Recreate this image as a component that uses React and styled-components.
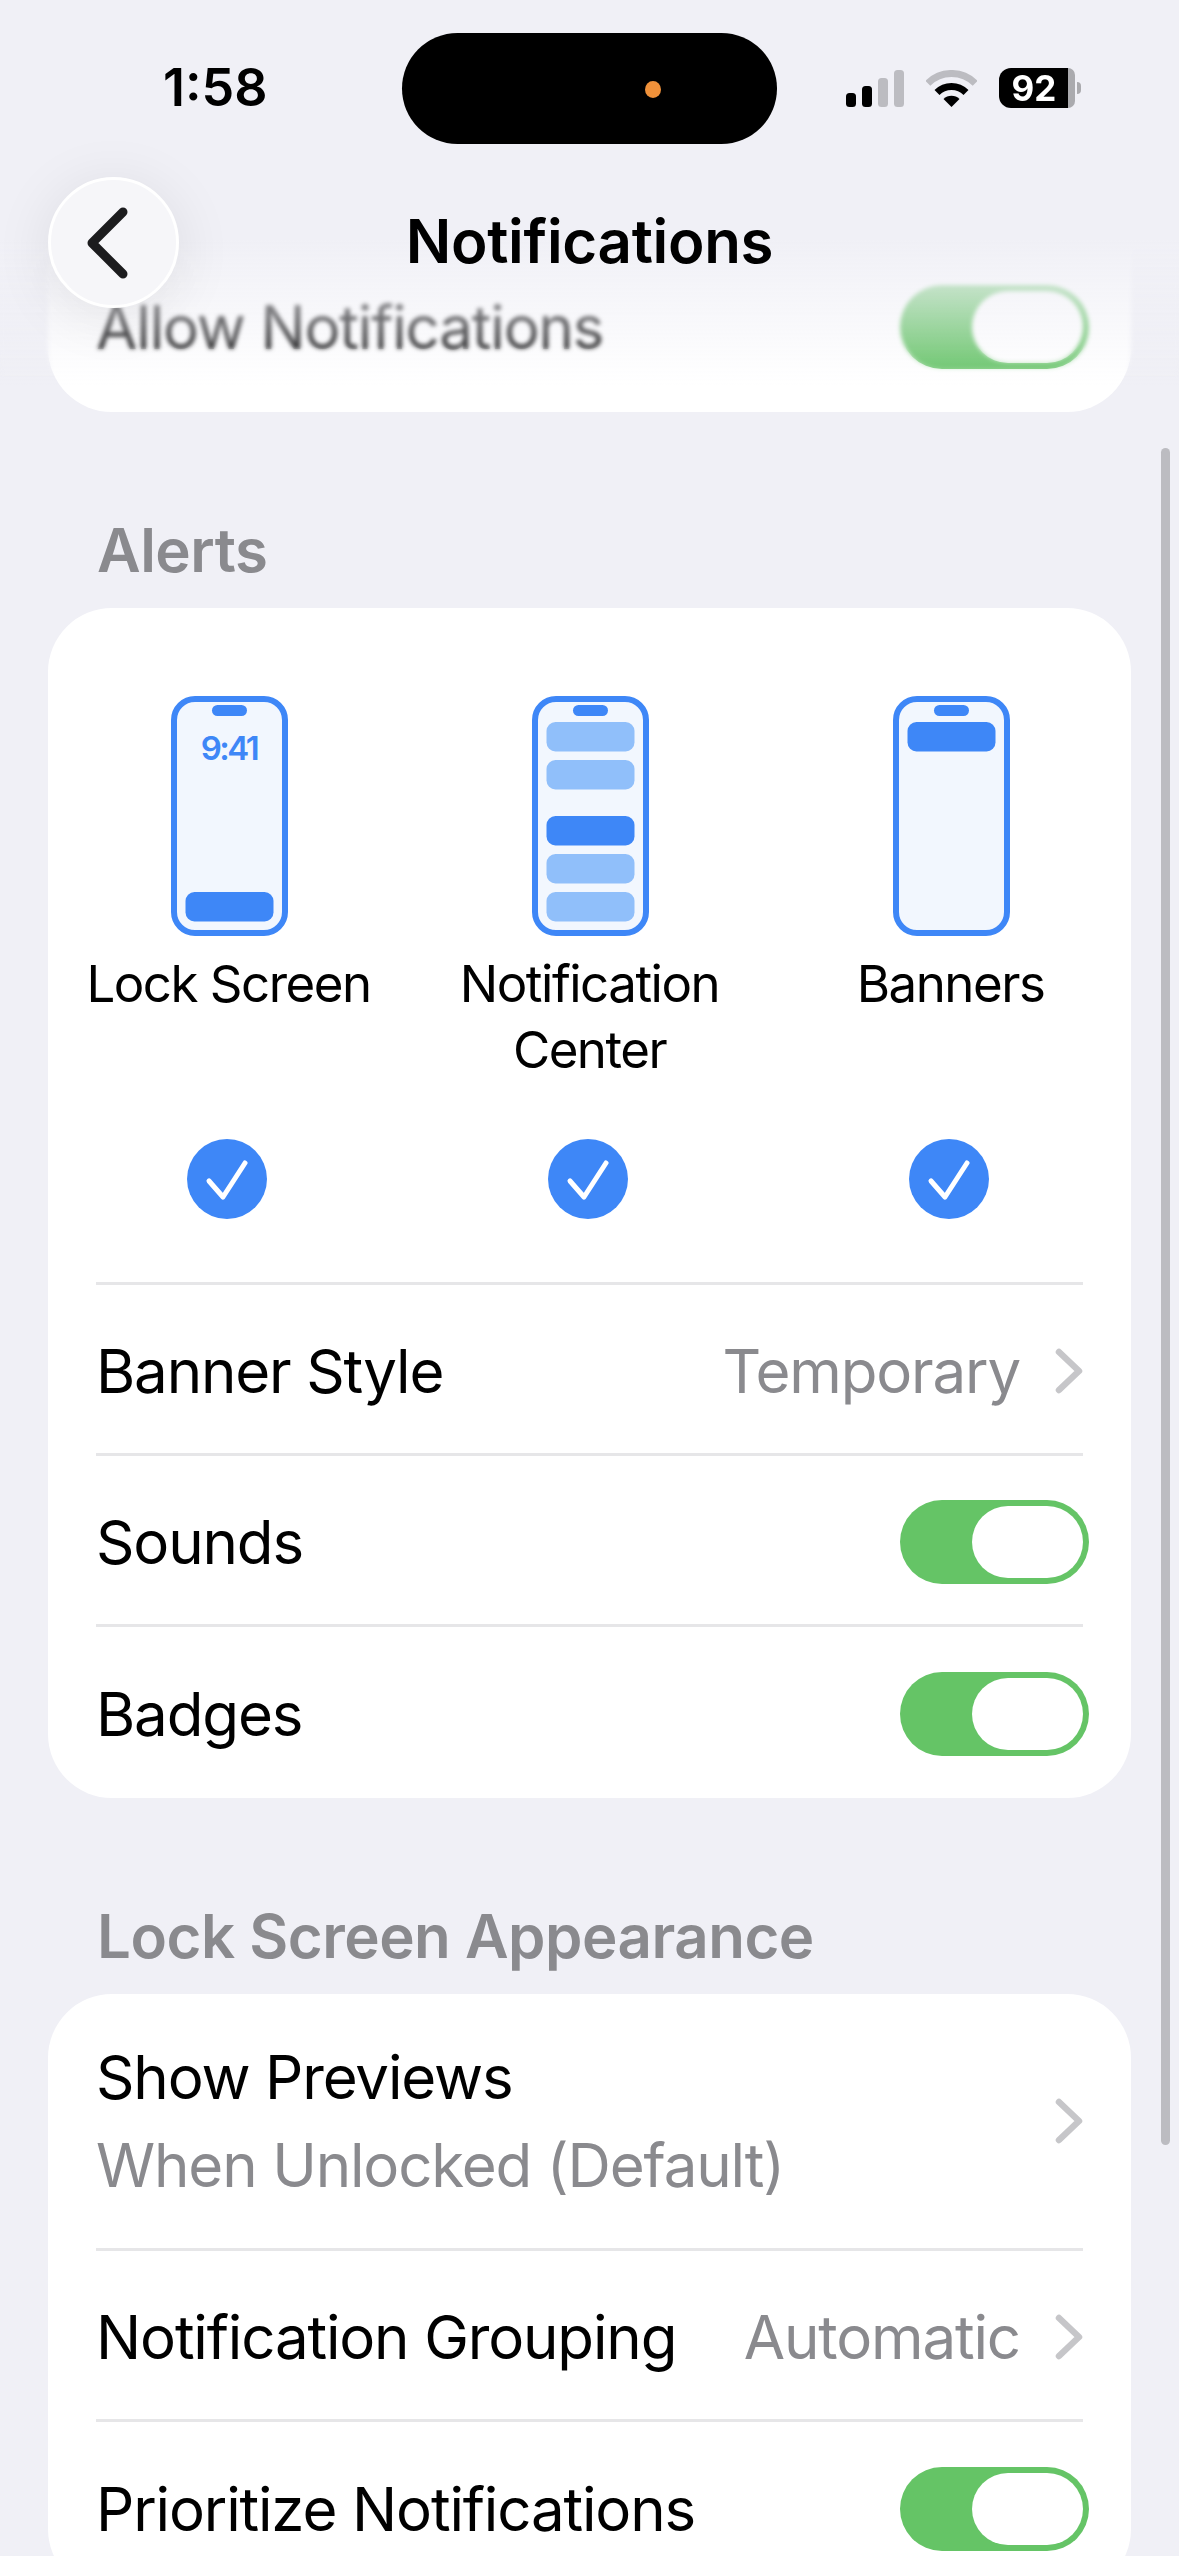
import React from 'react';
import styled, { createGlobalStyle } from 'styled-components';

const blue = '#3e87f7';
const lightBlue = '#90bffa';

const GlobalStyle = createGlobalStyle`
  html, body {
    margin: 0;
    padding: 0;
    background: #f0f0f6;
  }
  * { box-sizing: border-box; }
`;

function Signal() {
  return (
    <svg width="58" height="37" viewBox="0 0 58 37">
      <rect x="0" y="23" width="10" height="14" rx="3.5" fill="#000" />
      <rect x="16" y="16" width="10" height="21" rx="3.5" fill="#000" />
      <rect x="32" y="8" width="10" height="29" rx="3.5" fill="#bcbcc1" />
      <rect x="48" y="0" width="10" height="37" rx="3.5" fill="#bcbcc1" />
    </svg>
  );
}

function Wifi() {
  return (
    <svg width="51" height="37" viewBox="0 0 51 37" fill="none">
      <path d="M1.8 13.3A33.5 33.5 0 0 1 49.2 13.3" stroke="#bcbcc1" strokeWidth="7" />
      <path d="M11 22.5A20.5 20.5 0 0 1 40 22.5" stroke="#000" strokeWidth="7" />
      <path d="M25.5 37L17.5 29A11.3 11.3 0 0 1 33.5 29Z" fill="#000" />
    </svg>
  );
}

function Check() {
  return (
    <svg width="80" height="80" viewBox="0 0 80 80" fill="none">
      <path d="M22 42L36 58L58 24" stroke="#fff" strokeWidth="5" strokeLinecap="round" strokeLinejoin="round" />
    </svg>
  );
}

function Chevron() {
  return (
    <svg width="28" height="46" viewBox="0 0 28 46" fill="none">
      <path d="M4 4L24 23L4 42" stroke="#c6c6c9" strokeWidth="6.5" strokeLinecap="round" strokeLinejoin="round" />
    </svg>
  );
}

function PhoneShell({ children }) {
  return (
    <PhoneArt width="117" height="240" viewBox="0 0 117 240">
      <rect x="3" y="3" width="111" height="234" rx="21" fill="#f2f7fe" stroke={blue} strokeWidth="6" />
      <rect x="41" y="9" width="35" height="11" rx="5.5" fill={blue} />
      {children}
    </PhoneArt>
  );
}

function Bar({ y, light }) {
  return <rect x="14.5" y={y} width="88" height="29.5" rx="9" fill={light ? lightBlue : blue} />;
}

function Toggle() {
  return (
    <Track>
      <Knob />
    </Track>
  );
}

export default function App() {
  return (
    <>
      <GlobalStyle />
      <Screen>
        <Scroller>
          <Card $top>
            <FirstRow>
              <RowLabel>Allow Notifications</RowLabel>
              <Toggle />
            </FirstRow>
          </Card>

          <SectionTitle>Alerts</SectionTitle>
          <Card>
            <OptionGrid>
              {options.map((o) => (
                <Option key={o.label}>
                  <PhoneShell>{o.art}</PhoneShell>
                  <OptionLabel>{o.label}</OptionLabel>
                  <CheckCircle><Check /></CheckCircle>
                </Option>
              ))}
            </OptionGrid>
            <Row>
              <RowLabel>Banner Style</RowLabel>
              <Value>Temporary</Value>
              <Chevron />
            </Row>
            <Row>
              <RowLabel>Sounds</RowLabel>
              <Toggle />
            </Row>
            <Row>
              <RowLabel>Badges</RowLabel>
              <Toggle />
            </Row>
          </Card>

          <SectionTitle>Lock Screen Appearance</SectionTitle>
          <Card>
            <TallRow>
              <TwoLines>
                <RowLabel>Show Previews</RowLabel>
                <SubValue>When Unlocked (Default)</SubValue>
              </TwoLines>
              <Chevron />
            </TallRow>
            <Row>
              <RowLabel>Notification Grouping</RowLabel>
              <Value>Automatic</Value>
              <Chevron />
            </Row>
            <Row>
              <RowLabel>Prioritize Notifications</RowLabel>
              <Toggle />
            </Row>
          </Card>
        </Scroller>

        <TopBlur />
        <TopFade />
        <TopBar>
          <StatusBar>
            <Time>1:58</Time>
            <Island><IslandDot /></Island>
            <StatusIcons>
              <Signal />
              <Wifi />
              <Battery>
                <BatteryBody>92</BatteryBody>
                <BatteryRest />
                <BatteryNub />
              </Battery>
            </StatusIcons>
          </StatusBar>
          <NavBar>
            <BackButton>
              <svg width="48" height="80" viewBox="0 0 48 80" fill="none">
                <path d="M42 9L11 40L42 71" stroke="#1c1c1e" strokeWidth="9" strokeLinecap="round" strokeLinejoin="round" />
              </svg>
            </BackButton>
            <NavTitle>Notifications</NavTitle>
          </NavBar>
        </TopBar>
        <ScrollThumb />
      </Screen>
    </>
  );
}

const Screen = styled.div`
  position: relative;
  width: 1179px;
  height: 2556px;
  overflow: hidden;
  background: #f0f0f6;
  font-family: Inter, "Liberation Sans", sans-serif;
  color: #000;
`;

const Scroller = styled.div`
  display: flex;
  flex-direction: column;
  padding: 241px 48px 0;
`;

const Card = styled.section`
  background: #fff;
  border-radius: ${(p) => (p.$top ? '0 0 64px 64px' : '64px')};
  width: 1083px;
`;

const SectionTitle = styled.h2`
  margin: 103px 0 0 49px;
  height: 93px;
  font-size: 60px;
  line-height: 70px;
  font-weight: 600;
  letter-spacing: -0.5px;
  white-space: nowrap;
  color: #8a8a8e;
`;

const Row = styled.div`
  display: flex;
  align-items: center;
  height: 171px;
  margin: 0 48px;
  padding-top: 3px;
  border-top: 3px solid #e6e6e8;

  &:last-child {
    height: 174px;
  }
`;

const FirstRow = styled(Row)`
  height: 171px;
  padding-top: 0;
  border-top: none;

  &:last-child {
    height: 171px;
  }
`;

const TallRow = styled(Row)`
  height: 254px;
  padding-top: 0;
  border-top: none;
`;

const TwoLines = styled.div`
  flex: 1;
  display: flex;
  flex-direction: column;
  gap: 22px;
`;

const RowLabel = styled.span`
  flex: 1;
  font-size: 60px;
  line-height: 66px;
  letter-spacing: -1.15px;
  white-space: nowrap;
`;

const Value = styled.span`
  font-size: 60px;
  line-height: 66px;
  letter-spacing: -1.15px;
  color: #8a8a8e;
  margin-right: 35px;
`;

const SubValue = styled(Value)`
  margin-right: 0;
`;

const Track = styled.div`
  flex: none;
  width: 189px;
  height: 84px;
  margin-right: -6px;
  padding: 6px;
  display: flex;
  justify-content: flex-end;
  border-radius: 42px;
  background: #65c466;
`;

const Knob = styled.div`
  width: 111px;
  height: 72px;
  border-radius: 36px;
  background: #fff;
`;

const OptionGrid = styled.div`
  display: grid;
  grid-template-columns: repeat(3, 1fr);
  padding: 88px 0 63px;
`;

const Option = styled.div`
  display: flex;
  flex-direction: column;
  align-items: center;
`;

const PhoneArt = styled.svg`
  margin-left: 2px;
`;

const OptionLabel = styled.div`
  margin-top: 15px;
  height: 131px;
  width: 300px;
  font-size: 51px;
  line-height: 66px;
  letter-spacing: -1.5px;
  text-align: center;
`;

const CheckCircle = styled.div`
  width: 80px;
  height: 80px;
  margin: 57px 4px 0 0;
  border-radius: 50%;
  background: ${blue};
`;

const ClockText = styled.text`
  font-family: Inter, sans-serif;
  font-size: 33px;
  font-weight: 600;
  letter-spacing: -2.5px;
  fill: ${blue};
`;

const TopBlur = styled.div`
  position: absolute;
  left: 0;
  right: 0;
  top: 0;
  height: 380px;
  backdrop-filter: blur(2px);
  mask-image: linear-gradient(#000 345px, transparent 378px);
`;

const TopFade = styled.div`
  position: absolute;
  left: 0;
  right: 0;
  top: 0;
  height: 385px;
  background: linear-gradient(#f0f0f6 0, #f0f0f6 240px, rgba(240, 240, 246, 0) 385px);
`;

const TopBar = styled.header`
  position: absolute;
  left: 0;
  right: 0;
  top: 0;
`;

const StatusBar = styled.div`
  height: 177px;
  display: flex;
  align-items: flex-start;
  padding: 33px 98px 0 163px;
`;

const Time = styled.div`
  width: 239px;
  margin-top: 30px;
  font-size: 52px;
  line-height: 50px;
  font-weight: 600;
`;

const Island = styled.div`
  flex: none;
  position: relative;
  width: 375px;
  height: 111px;
  border-radius: 56px;
  background: #000;
`;

const IslandDot = styled.div`
  position: absolute;
  left: 243px;
  top: 48px;
  width: 16px;
  height: 17px;
  border-radius: 50%;
  background: #f0913a;
`;

const StatusIcons = styled.div`
  display: flex;
  align-items: center;
  gap: 22px;
  margin: 35px 0 0 69px;
`;

const Battery = styled.div`
  display: flex;
  align-items: center;
`;

const BatteryBody = styled.div`
  width: 69px;
  height: 40px;
  padding-left: 1px;
  border-radius: 12px 0 0 12px;
  background: #000;
  color: #fff;
  font-size: 35px;
  line-height: 40px;
  font-weight: 700;
  text-align: center;
`;

const BatteryRest = styled.div`
  width: 7px;
  height: 40px;
  border-radius: 0 10px 10px 0;
  background: #aaaaae;
`;

const BatteryNub = styled.div`
  width: 4px;
  height: 12px;
  margin-left: 2px;
  border-radius: 0 6px 6px 0;
  background: #aaaaae;
`;

const NavBar = styled.div`
  position: relative;
  height: 131px;
  display: flex;
  align-items: center;
  justify-content: center;
`;

const BackButton = styled.div`
  position: absolute;
  left: 48px;
  top: 0;
  width: 131px;
  height: 131px;
  display: flex;
  align-items: center;
  padding-left: 30px;
  border-radius: 50%;
  border: 3px solid #fff;
  background: #f6f6f9;
  box-shadow: 0 8px 60px rgba(0, 0, 0, 0.09);
`;

const NavTitle = styled.div`
  margin-top: -4px;
  font-size: 60px;
  line-height: 72px;
  font-weight: 600;
  letter-spacing: -0.3px;
`;

const ScrollThumb = styled.div`
  position: absolute;
  left: 1161px;
  top: 448px;
  width: 9px;
  height: 1697px;
  border-radius: 5px;
  background: #bcbcc1;
`;

const options = [
  {
    label: 'Lock Screen',
    art: (
      <>
        <ClockText x="58" y="64" textAnchor="middle">9:41</ClockText>
        <Bar y={196} />
      </>
    ),
  },
  {
    label: 'Notification Center',
    art: (
      <>
        <Bar y={26} light />
        <Bar y={64} light />
        <Bar y={120} />
        <Bar y={158} light />
        <Bar y={196} light />
      </>
    ),
  },
  { label: 'Banners', art: <Bar y={26} /> },
];
